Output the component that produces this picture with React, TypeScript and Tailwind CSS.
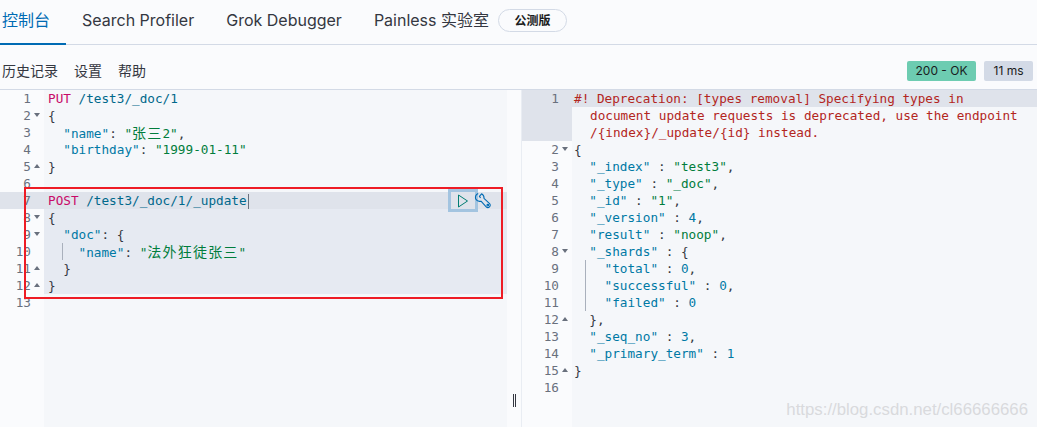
import type { ReactNode } from "react";

const mono = "font-['DejaVu_Sans_Mono','Noto_Sans_CJK_SC',monospace] text-[12.7px] leading-[17px] whitespace-pre";

const M = ({ children }: { children: ReactNode }) => <span className="text-[#c80a68]">{children}</span>;
const U = ({ children }: { children: ReactNode }) => <span className="text-[#00688b]">{children}</span>;
const K = ({ children }: { children: ReactNode }) => <span className="text-[#0079a5]">{children}</span>;
const S = ({ children }: { children: ReactNode }) => <span className="text-[#017d3c]">{children}</span>;
const P = ({ children }: { children: ReactNode }) => <span className="text-[#343741]">{children}</span>;
const R = ({ children }: { children: ReactNode }) => <span className="text-[#b3261e]">{children}</span>;
const Cjk = ({ children }: { children: ReactNode }) => (
  <span className="font-['Noto_Sans_CJK_SC',sans-serif] text-[14px] tracking-[1.2px]">{children}</span>
);

function Fold({ dir }: { dir: "up" | "down" }) {
  return (
    <svg width="6" height="4" viewBox="0 0 6 4" className="absolute top-[6px] right-[4px] text-[#69707d]">
      <path d={dir === "down" ? "M0 0H6L3 4Z" : "M0 4H6L3 0Z"} fill="currentColor" />
    </svg>
  );
}

type Line = { n: number; fold?: "up" | "down"; code?: ReactNode; guide?: boolean };

const left: Line[] = [
  { n: 1, code: <><M>PUT</M> <U>/test3/_doc/1</U></> },
  { n: 2, fold: "down", code: <P>{"{"}</P> },
  { n: 3, code: <>  <K>"name"</K><P>: </P><S>"<Cjk>张三</Cjk>2"</S><P>,</P></> },
  { n: 4, code: <>  <K>"birthday"</K><P>: </P><S>"1999-01-11"</S></> },
  { n: 5, fold: "up", code: <P>{"}"}</P> },
  { n: 6 },
  { n: 7, code: <><M>POST</M> <U>/test3/_doc/1/_update</U><span className="ml-px inline-block h-[15px] w-px bg-[#69707d] align-middle" /></> },
  { n: 8, fold: "down", code: <P>{"{"}</P> },
  { n: 9, fold: "down", code: <>  <K>"doc"</K><P>: {"{"}</P></> },
  { n: 10, guide: true, code: <>    <K>"name"</K><P>: </P><S>"<Cjk>法外狂徒张三</Cjk>"</S></> },
  { n: 11, fold: "up", code: <P>{"  }"}</P> },
  { n: 12, fold: "up", code: <P>{"}"}</P> },
  { n: 13 },
];

const right: Line[] = [
  { n: 2, fold: "down", code: <P>{"{"}</P> },
  { n: 3, code: <>  <K>"_index"</K><P> : </P><S>"test3"</S><P>,</P></> },
  { n: 4, code: <>  <K>"_type"</K><P> : </P><S>"_doc"</S><P>,</P></> },
  { n: 5, code: <>  <K>"_id"</K><P> : </P><S>"1"</S><P>,</P></> },
  { n: 6, code: <>  <K>"_version"</K><P> : </P><K>4</K><P>,</P></> },
  { n: 7, code: <>  <K>"result"</K><P> : </P><S>"noop"</S><P>,</P></> },
  { n: 8, fold: "down", code: <>  <K>"_shards"</K><P> : {"{"}</P></> },
  { n: 9, guide: true, code: <>    <K>"total"</K><P> : </P><K>0</K><P>,</P></> },
  { n: 10, guide: true, code: <>    <K>"successful"</K><P> : </P><K>0</K><P>,</P></> },
  { n: 11, guide: true, code: <>    <K>"failed"</K><P> : </P><K>0</K></> },
  { n: 12, fold: "up", code: <P>{"  },"}</P> },
  { n: 13, code: <>  <K>"_seq_no"</K><P> : </P><K>3</K><P>,</P></> },
  { n: 14, code: <>  <K>"_primary_term"</K><P> : </P><K>1</K></> },
  { n: 15, fold: "up", code: <P>{"}"}</P> },
  { n: 16 },
];

function Gutter({ n, fold, className }: { n: number; fold?: "up" | "down"; className: string }) {
  return (
    <div className={`relative text-right text-[#69707d] ${className}`}>
      {n}
      {fold && <Fold dir={fold} />}
    </div>
  );
}

function LeftRow({ line }: { line: Line }) {
  const active = line.n === 7;
  const selected = line.n >= 7 && line.n <= 12;
  return (
    <div className={`flex h-[17px] ${mono}`}>
      <Gutter n={line.n} fold={line.fold} className={`w-[44px] pr-[13px] ${active ? "bg-[#dfe3eb]" : ""}`} />
      <div className={`relative flex-1 pl-[4px] ${active ? "bg-[#dfe3eb]" : selected ? "bg-[#e6eaf2]" : ""}`}>
        {line.guide && <span className="absolute bottom-0 top-0 left-[18px] w-px bg-[#a9b0bc]" />}
        {line.code}
      </div>
    </div>
  );
}

function RightRow({ line }: { line: Line }) {
  return (
    <div className={`flex h-[17px] ${mono}`}>
      <Gutter n={line.n} fold={line.fold} className="w-[50px] pr-[13px]" />
      <div className="relative flex-1 pl-[2px]">
        {line.guide && <span className="absolute bottom-0 top-0 left-[13px] w-px bg-[#a9b0bc]" />}
        {line.code}
      </div>
    </div>
  );
}

export default function App() {
  return (
    <div className="relative h-[427px] w-[1037px] overflow-hidden bg-[#fafbfd] font-['Inter','Noto_Sans_CJK_SC',sans-serif] text-[#343741]">
      <nav className="flex h-[45px] items-stretch gap-[32px] border-b border-[#d3dae6] text-[16px]">
        <div className="-mb-px flex w-[66px] items-center border-b-2 border-[#006bb4] pb-[4px] pl-[2px] text-[#006bb4]">控制台</div>
        <div className="-ml-[16px] flex items-center pb-[4px]">Search Profiler</div>
        <div className="flex items-center pb-[4px]">Grok Debugger</div>
        <div className="flex items-center gap-[9px] pb-[3px]">
          <span className="-mt-px">Painless 实验室</span>
          <span className="flex h-[23px] w-[69px] items-center justify-center rounded-full border border-[#d3dae6] text-[12px] font-semibold text-[#1a1c21]">公测版</span>
        </div>
      </nav>

      <div className="flex h-[45px] items-center justify-between border-b border-[#d3dae6] pl-[2px] pr-[4px] pt-[8px]">
        <div className="-mt-[2px] flex gap-[16px] text-[14px]">
          <span>历史记录</span>
          <span>设置</span>
          <span>帮助</span>
        </div>
        <div className="flex items-center gap-[8px] text-[12px]">
          <span className="flex h-[20px] w-[69px] items-center justify-center rounded-[2px] bg-[#6dccb1] text-[#1a1c21]">200 - OK</span>
          <span className="flex h-[20px] w-[49px] items-center justify-center rounded-[2px] bg-[#d3dae6] text-[#1a1c21]">11 ms</span>
        </div>
      </div>

      <div className="flex h-[337px]">
        <div className="relative w-[507px] bg-[linear-gradient(to_right,#fafbfd_44px,#f5f7fa_44px)]">
          {left.map((line) => <LeftRow key={line.n} line={line} />)}
          <div className="absolute left-[448px] top-[99px] flex h-[23px] w-[30px] items-center justify-center border-[3px] border-[#a3c4e0]">
            <svg width="12" height="14" viewBox="0 0 12 14" fill="none">
              <path d="M1.5 1V13L10.5 7Z" stroke="#017d73" strokeWidth="1" strokeLinejoin="round" />
            </svg>
          </div>
          <svg width="18" height="18" viewBox="0 0 18 18" fill="none" stroke="#006bb4" strokeWidth="1.1" className="absolute left-[474px] top-[102px]">
            <path d="M4.2 1.6 A4.7 4.7 0 0 0 1.6 6.8 A4.7 4.7 0 0 0 7 9.2 L12.2 14.8 A2.3 2.3 0 0 0 15.6 11.6 L10 6.4 A4.7 4.7 0 0 0 7.6 1.8 L5.4 4.4 L6.6 5.8" strokeLinejoin="round" />
            <circle cx="13.8" cy="13.2" r="0.8" />
          </svg>
        </div>

        <div className="flex w-[15px] items-end justify-center border-r border-[#e9edf3] pb-[20px]">
          <span className="h-[13px] w-[3px] border-x border-[#343741]" />
        </div>

        <div className="flex-1 bg-[linear-gradient(to_right,#fafbfd_50px,#f5f7fa_50px)]">
          <div className={`flex h-[51px] ${mono}`}>
            <div className="w-[50px] bg-[#dfe3eb] pr-[13px] text-right text-[#69707d]">1</div>
            <div className="flex-1">
              <div className="bg-[#dfe3eb] pl-[2px]"><R>#! Deprecation: [types removal] Specifying types in</R></div>
              <div className="pl-[18px]"><R>document update requests is deprecated, use the endpoint</R></div>
              <div className="pl-[18px]"><R>/{"{index}"}/_update/{"{id}"} instead.</R></div>
            </div>
          </div>
          {right.map((line) => <RightRow key={line.n} line={line} />)}
        </div>
      </div>

      {/* annotations on the screenshot */}
      <div className="pointer-events-none absolute left-[24px] top-[187px] h-[112px] w-[479px] border-2 border-[#ee1c25]" />
      <span className="pointer-events-none absolute right-[9px] top-[397px] font-['Liberation_Sans',sans-serif] text-[16.8px] text-[#d9dadd]">https://blog.csdn.net/cl66666666</span>
    </div>
  );
}
